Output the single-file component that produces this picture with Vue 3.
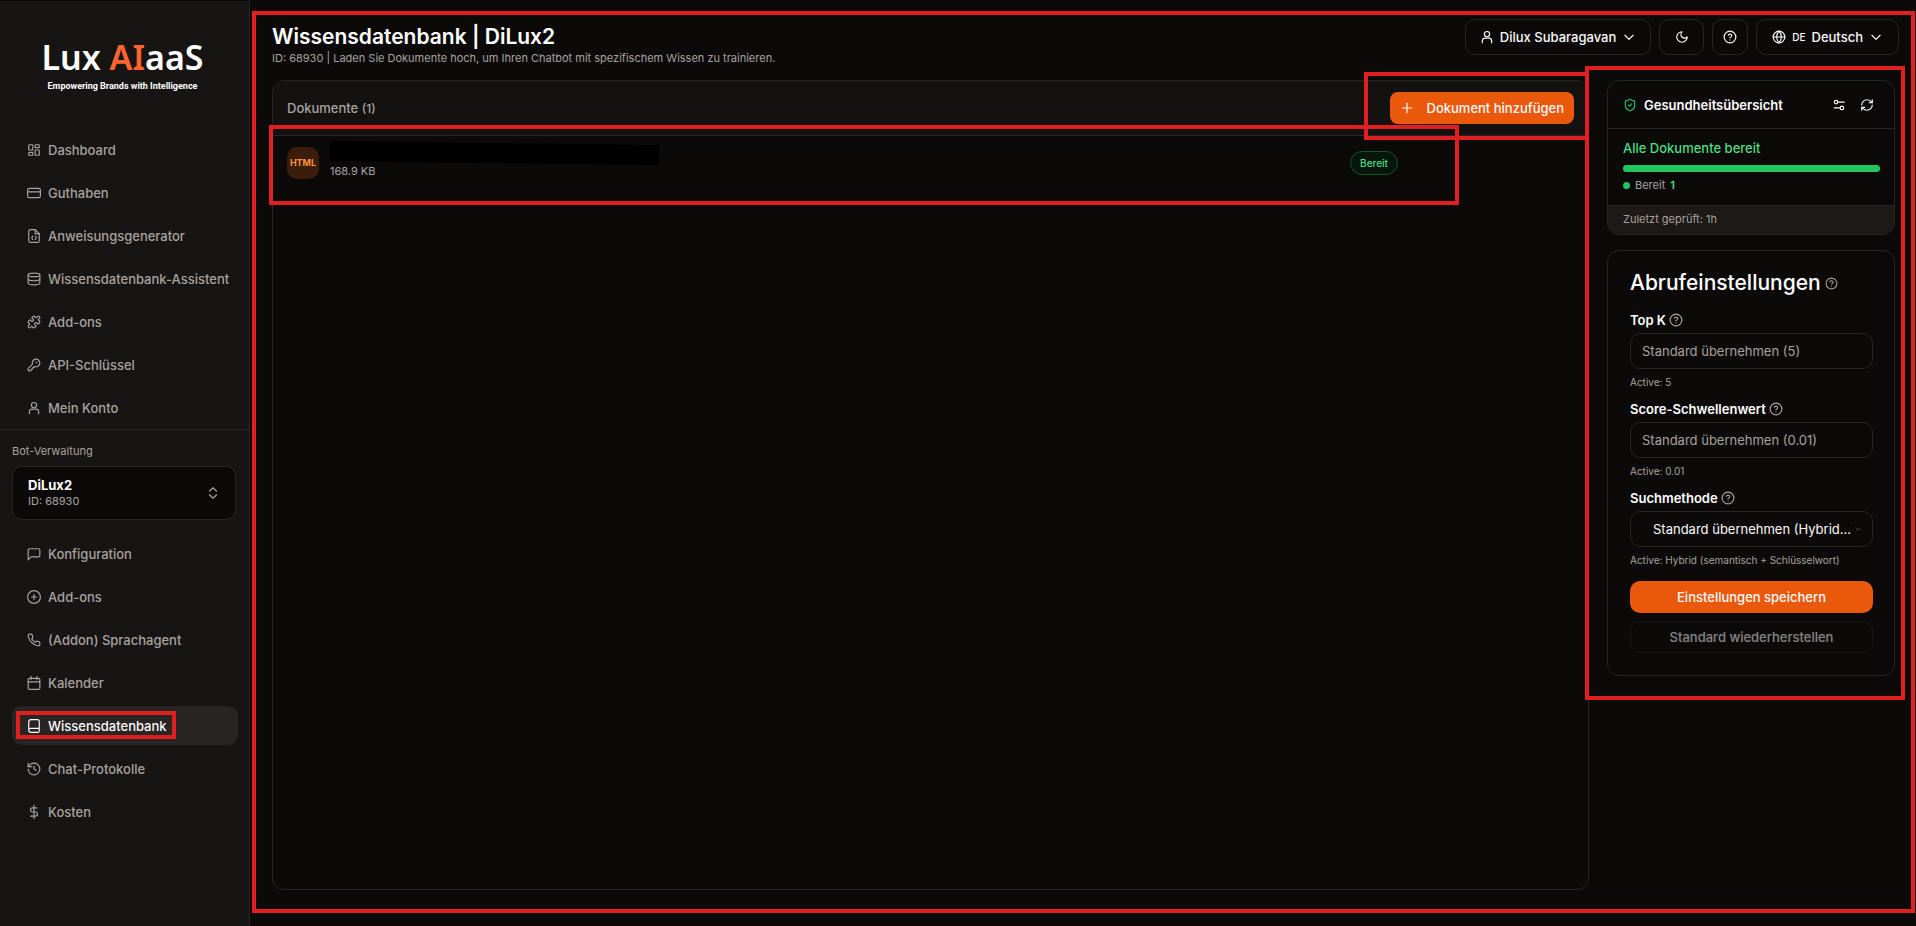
<template>
  <div class="app">
    <aside class="sidebar">
      <a class="logo" href="#">
        <span class="logo-name">Lux <span class="logo-accent">AI</span>aaS</span>
        <span class="logo-tag">Empowering Brands with Intelligence</span>
      </a>

      <nav class="nav">
        <a v-for="item in mainNav" :key="item.label" class="nav-item" href="#">
          <svg class="icon" viewBox="0 0 24 24" v-html="icons[item.icon]"></svg>
          {{ item.label }}
        </a>
      </nav>

      <div class="bot">
        <div class="bot-title">Bot-Verwaltung</div>
        <button class="bot-select" type="button">
          <span class="bot-info">
            <span class="bot-name">DiLux2</span>
            <span class="bot-id">ID: 68930</span>
          </span>
          <svg class="icon" viewBox="0 0 24 24" v-html="icons.upDown"></svg>
        </button>
      </div>

      <nav class="nav">
        <a
          v-for="item in botNav"
          :key="item.label"
          class="nav-item"
          :class="{ active: item.label === current }"
          href="#"
          @click.prevent="current = item.label"
        >
          <svg class="icon" viewBox="0 0 24 24" v-html="icons[item.icon]"></svg>
          {{ item.label }}
          <span v-if="item.marked" class="mark mark-nav"></span>
        </a>
      </nav>
    </aside>

    <main class="main">
      <header class="topbar">
        <div class="heading">
          <h1>Wissensdatenbank | DiLux2</h1>
          <p>ID: 68930 | Laden Sie Dokumente hoch, um Ihren Chatbot mit spezifischem Wissen zu trainieren.</p>
        </div>
        <div class="actions">
          <button class="top-btn user" type="button">
            <svg class="icon" viewBox="0 0 24 24" v-html="icons.user"></svg>
            Dilux Subaragavan
            <svg class="icon" viewBox="0 0 24 24" v-html="icons.down"></svg>
          </button>
          <button class="top-btn theme" type="button" aria-label="Design wechseln">
            <svg class="icon" viewBox="0 0 24 24" v-html="icons.moon"></svg>
          </button>
          <button class="top-btn help" type="button" aria-label="Hilfe">
            <svg class="icon" viewBox="0 0 24 24" v-html="icons.help"></svg>
          </button>
          <button class="top-btn lang" type="button">
            <svg class="icon" viewBox="0 0 24 24" v-html="icons.globe"></svg>
            <span class="lang-code">DE</span>
            Deutsch
            <svg class="icon" viewBox="0 0 24 24" v-html="icons.down"></svg>
          </button>
        </div>
      </header>

      <div class="content">
        <section class="docs">
          <div class="docs-head">
            <h2>Dokumente <span>({{ documents.length }})</span></h2>
            <button class="add-btn" type="button">
              <svg class="icon" viewBox="0 0 24 24" v-html="icons.plus"></svg>
              Dokument hinzufügen
            </button>
            <span class="mark mark-add"></span>
          </div>
          <div v-for="doc in documents" :key="doc.type" class="doc">
            <span class="doc-type">{{ doc.type }}</span>
            <div class="doc-info">
              <div class="doc-redacted"></div>
              <div class="doc-size">{{ doc.size }}</div>
            </div>
            <span class="status">{{ doc.status }}</span>
            <span class="mark mark-doc"></span>
          </div>
        </section>

        <aside class="panels">
          <section class="card health">
            <div class="health-head">
              <svg class="icon shield" viewBox="0 0 24 24" v-html="icons.shield"></svg>
              <h2>Gesundheitsübersicht</h2>
              <button class="icon-btn" type="button" aria-label="Einstellungen">
                <svg class="icon" viewBox="0 0 24 24" v-html="icons.settings"></svg>
              </button>
              <button class="icon-btn" type="button" aria-label="Aktualisieren">
                <svg class="icon" viewBox="0 0 24 24" v-html="icons.refresh"></svg>
              </button>
            </div>
            <div class="health-body">
              <div class="health-state">Alle Dokumente bereit</div>
              <div class="bar"><div class="bar-fill" :style="{ width: ready + '%' }"></div></div>
              <div class="legend"><span class="dot"></span>Bereit <b>1</b></div>
            </div>
            <div class="health-foot">Zuletzt geprüft: 1h</div>
          </section>

          <form class="card settings" @submit.prevent>
            <h2 class="settings-title">
              Abrufeinstellungen
              <svg class="icon hint" viewBox="0 0 24 24" v-html="icons.help"></svg>
            </h2>

            <div class="field">
              <label for="topk">Top K <svg class="icon hint" viewBox="0 0 24 24" v-html="icons.help"></svg></label>
              <input id="topk" v-model="topK" type="text" placeholder="Standard übernehmen (5)" />
              <div class="note">Active: 5</div>
            </div>
            <div class="field">
              <label for="score">Score-Schwellenwert <svg class="icon hint" viewBox="0 0 24 24" v-html="icons.help"></svg></label>
              <input id="score" v-model="score" type="text" placeholder="Standard übernehmen (0.01)" />
              <div class="note">Active: 0.01</div>
            </div>
            <div class="field">
              <label for="method">Suchmethode <svg class="icon hint" viewBox="0 0 24 24" v-html="icons.help"></svg></label>
              <div class="select-wrap">
                <select id="method">
                  <option>Standard übernehmen (Hybrid...</option>
                </select>
                <svg class="icon select-arrow" viewBox="0 0 24 24" v-html="icons.down"></svg>
              </div>
              <div class="note">Active: Hybrid (semantisch + Schlüsselwort)</div>
            </div>

            <button class="save" type="submit">Einstellungen speichern</button>
            <button class="reset" type="button" disabled>Standard wiederherstellen</button>
          </form>
          <span class="mark mark-panels"></span>
        </aside>
      </div>
      <span class="mark mark-main"></span>
    </main>
  </div>
</template>

<script setup>
import { ref } from 'vue'

const current = ref('Wissensdatenbank')
const topK = ref('')
const score = ref('')
const ready = ref(100)

const documents = [{ type: 'HTML', size: '168.9 KB', status: 'Bereit' }]

const mainNav = [
  { label: 'Dashboard', icon: 'dashboard' },
  { label: 'Guthaben', icon: 'card' },
  { label: 'Anweisungsgenerator', icon: 'fileCode' },
  { label: 'Wissensdatenbank-Assistent', icon: 'database' },
  { label: 'Add-ons', icon: 'puzzle' },
  { label: 'API-Schlüssel', icon: 'key' },
  { label: 'Mein Konto', icon: 'user' },
]

const botNav = [
  { label: 'Konfiguration', icon: 'message' },
  { label: 'Add-ons', icon: 'plusCircle' },
  { label: '(Addon) Sprachagent', icon: 'phone' },
  { label: 'Kalender', icon: 'calendar' },
  { label: 'Wissensdatenbank', icon: 'book', marked: true },
  { label: 'Chat-Protokolle', icon: 'history' },
  { label: 'Kosten', icon: 'dollar' },
]

const icons = {
  dashboard: '<rect width="7" height="9" x="3" y="3" rx="1"/><rect width="7" height="5" x="14" y="3" rx="1"/><rect width="7" height="9" x="14" y="12" rx="1"/><rect width="7" height="5" x="3" y="16" rx="1"/>',
  card: '<rect width="22" height="16" x="1" y="4" rx="3"/><path d="M1 10h22"/>',
  fileCode: '<path d="M14 1H6a3 3 0 0 0-3 3v16a3 3 0 0 0 3 3h12a3 3 0 0 0 3-3V8z"/><path d="M14 1v7h7"/><path d="m10 12-2 3 2 3"/><path d="m14 12 2 3-2 3"/>',
  database: '<ellipse cx="12" cy="5" rx="10" ry="3"/><path d="M2 5v14c0 2 4 3 10 3s10-1 10-3V5"/><path d="M2 12c0 2 4 3 10 3s10-1 10-3"/>',
  puzzle: '<path d="M19.439 7.85c-.049.322.059.648.289.878l1.568 1.568c.47.47.706 1.087.706 1.704s-.235 1.233-.706 1.704l-1.611 1.611a.98.98 0 0 1-.837.276c-.47-.07-.802-.48-.968-.925a2.501 2.501 0 1 0-3.214 3.214c.446.166.855.497.925.968a.979.979 0 0 1-.276.837l-1.61 1.61a2.404 2.404 0 0 1-1.705.707 2.402 2.402 0 0 1-1.704-.706l-1.568-1.568a1.026 1.026 0 0 0-.877-.29c-.493.074-.84.504-1.02.968a2.5 2.5 0 1 1-3.237-3.237c.464-.18.894-.527.967-1.02a1.026 1.026 0 0 0-.289-.877l-1.568-1.568A2.402 2.402 0 0 1 1.998 12c0-.617.236-1.234.706-1.704L4.23 8.77c.24-.24.581-.353.917-.303.515.077.877.528 1.073 1.01a2.5 2.5 0 1 0 3.259-3.259c-.482-.196-.933-.558-1.01-1.073-.05-.336.062-.676.303-.917l1.525-1.525A2.402 2.402 0 0 1 12 1.998c.617 0 1.234.236 1.704.706l1.568 1.568c.23.23.556.338.877.29.493-.074.84-.504 1.02-.968a2.5 2.5 0 1 1 3.237 3.237c-.464.18-.894.527-.967 1.02Z"/>',
  key: '<path d="M2.586 17.414A2 2 0 0 0 2 18.828V21a1 1 0 0 0 1 1h3a1 1 0 0 0 1-1v-1a1 1 0 0 1 1-1h1a1 1 0 0 0 1-1v-1a1 1 0 0 1 1-1h.172a2 2 0 0 0 1.414-.586l.814-.814a6.5 6.5 0 1 0-4-4z"/><circle cx="16.5" cy="7.5" r=".5"/>',
  user: '<circle cx="12" cy="7" r="4.5"/><path d="M20 22v-3a5 5 0 0 0-5-5H9a5 5 0 0 0-5 5v3"/>',
  upDown: '<path d="m6 15 6 6 6-6"/><path d="m6 9 6-6 6 6"/>',
  message: '<path d="M22 15a2 2 0 0 1-2 2H7l-5 5V5a2 2 0 0 1 2-2h16a2 2 0 0 1 2 2z"/>',
  plusCircle: '<circle cx="12" cy="12" r="11"/><path d="M8 12h8"/><path d="M12 8v8"/>',
  phone: '<path d="M22 16.92v3a2 2 0 0 1-2.18 2 19.79 19.79 0 0 1-8.63-3.07 19.5 19.5 0 0 1-6-6 19.79 19.79 0 0 1-3.07-8.67A2 2 0 0 1 4.11 2h3a2 2 0 0 1 2 1.72c.127.96.361 1.903.7 2.81a2 2 0 0 1-.45 2.11L8.09 9.91a16 16 0 0 0 6 6l1.27-1.27a2 2 0 0 1 2.11-.45c.907.339 1.85.573 2.81.7A2 2 0 0 1 22 16.92z"/>',
  calendar: '<rect width="20" height="19" x="2" y="4" rx="2"/><path d="M7 1v5"/><path d="M17 1v5"/><path d="M2 10h20"/>',
  book: '<path d="M3 19V5a4 4 0 0 1 4-4h11a3 3 0 0 1 3 3v16a3 3 0 0 1-3 3H7a4 4 0 0 1-4-4 3 3 0 0 1 3-3h15"/>',
  history: '<path d="M2 12a10 10 0 1 0 10-10 10.8 10.8 0 0 0-7.5 3L2 8"/><path d="M2 2v6h6"/><path d="M12 7v5l4 2"/>',
  dollar: '<path d="M12 1v22"/><path d="M17 5H9.5a3.5 3.5 0 0 0 0 7h5a3.5 3.5 0 0 1 0 7H6"/>',
  down: '<path d="m5 9 7 7 7-7"/>',
  moon: '<path d="M12 3a6 6 0 0 0 9 9 9 9 0 1 1-9-9Z"/>',
  help: '<circle cx="12" cy="12" r="10"/><path d="M9.09 9a3 3 0 0 1 5.83 1c0 2-3 3-3 3"/><path d="M12 17h.01"/>',
  globe: '<circle cx="12" cy="12" r="10"/><path d="M12 2a14.5 14.5 0 0 0 0 20 14.5 14.5 0 0 0 0-20"/><path d="M2 12h20"/>',
  plus: '<path d="M4 12h16"/><path d="M12 4v16"/>',
  shield: '<path d="M20 13c0 5-3.5 7.5-7.66 8.95a1 1 0 0 1-.67-.01C7.5 20.5 4 18 4 13V6a1 1 0 0 1 1-1c2 0 4.5-1.2 6.24-2.72a1.17 1.17 0 0 1 1.52 0C14.51 3.81 17 5 19 5a1 1 0 0 1 1 1z"/><path d="m9 12 2 2 4-4"/>',
  settings: '<path d="M21 7H10"/><path d="M14 17H4"/><circle cx="17" cy="17" r="3"/><circle cx="7" cy="7" r="3"/>',
  refresh: '<path d="M3 12a9 9 0 0 1 9-9 9.75 9.75 0 0 1 6.74 2.74L21 8"/><path d="M21 3v5h-5"/><path d="M21 12a9 9 0 0 1-9 9 9.75 9.75 0 0 1-6.74-2.74L3 16"/><path d="M8 16H3v5"/>',
}
</script>

<style>
body { background: #0c0a09; }
</style>

<style scoped>
* { box-sizing: border-box; }
.app {
  display: flex; min-height: 100vh; background: #0c0a09; color: #fafaf9;
  font-family: Inter, "Liberation Sans", sans-serif; font-size: 13px; line-height: 16px;
}
h1, h2, p { margin: 0; }
button, input, select { font: inherit; color: inherit; }
button { cursor: pointer; }
a { color: inherit; text-decoration: none; }
.icon {
  width: 14px; height: 14px; flex: none; fill: none; stroke: currentColor;
  stroke-width: 2; stroke-linecap: round; stroke-linejoin: round;
}

/* Sidebar */
.sidebar {
  width: 250px; flex: none; background: #171513; border-right: 1px solid #292524;
  border-top: 1px solid #0c0a09;
}
.logo { display: flex; flex-direction: column; align-items: center; padding: 36px 4px 35px 0; }
.logo-name { font: 600 34px/40px "Noto Sans", sans-serif; color: #fff; }
.logo-accent { color: #ff6430; }
.logo-tag { font: 700 9px/18px Roboto, sans-serif; color: #fff; }
.nav { display: flex; flex-direction: column; gap: 4px; padding: 0 11px 2px 12px; }
.nav-item {
  position: relative; display: flex; align-items: center; gap: 7px; height: 39px;
  padding: 0 15px; border-radius: 10px; color: #a8a29e; font-weight: 500; white-space: nowrap;
}
.nav-item.active { background: #292524; color: #fafaf9; }
.bot { border-top: 1px solid #292524; padding: 13px 13px 14px 12px; }
.bot-title { font-size: 11px; color: #a8a29e; margin-bottom: 7px; }
.bot-select {
  display: flex; align-items: center; justify-content: space-between; width: 100%; height: 54px;
  padding: 0 15px; border: 1px solid #292524; border-radius: 10px; background: #0c0a09;
  color: #a8a29e; text-align: left;
}
.bot-info { display: flex; flex-direction: column; }
.bot-name { color: #fff; font-weight: 700; }
.bot-id { font-size: 11px; }

/* Header */
.main { position: relative; flex: 1; min-width: 0; display: flex; flex-direction: column; }
.topbar { display: flex; justify-content: space-between; height: 80px; padding: 19px 17px 0 22px; }
.heading { padding-top: 5px; }
h1 { font-size: 21px; line-height: 26px; font-weight: 600; color: #fff; }
.heading p { font-size: 11px; color: #a8a29e; }
.actions { display: flex; gap: 8px; }
.top-btn {
  display: flex; align-items: center; justify-content: center; gap: 6px; height: 36px;
  padding: 0 14px; border: 1px solid #292524; border-radius: 10px; background: #0c0a09; font-weight: 500;
}
.top-btn.theme { width: 45px; }
.top-btn.help { width: 36px; padding: 0; }
.top-btn.lang { padding: 0 15px; }
.lang-code { font-size: 10px; }

/* Documents */
.content { flex: 1; display: flex; align-items: stretch; gap: 18px; padding: 0 21px 36px 22px; }
.docs { flex: 1; min-width: 0; border: 1px solid #292524; border-radius: 12px; }
.docs-head {
  position: relative; display: flex; align-items: center; justify-content: space-between;
  height: 55px; padding: 0 14px; background: #141210; border-bottom: 1px solid #292524;
  border-radius: 11px 11px 0 0;
}
.docs-head h2 { font-size: 13px; font-weight: 500; color: #a8a29e; }
.docs-head h2 span { font-size: 12px; }
.add-btn {
  display: flex; align-items: center; gap: 13px; height: 32px; padding: 0 10px;
  border: 0; border-radius: 8px; background: #ea580c; font-weight: 500;
}
.doc { position: relative; display: flex; align-items: center; gap: 11px; height: 54px; padding: 0 190px 0 14px; }
.doc-type {
  display: flex; align-items: center; justify-content: center; width: 32px; height: 32px;
  border-radius: 10px; background: #3b1d0b; color: #fb923c; font-size: 9px; font-weight: 700;
}
.doc-info { flex: 1; }
.doc-redacted {
  width: 329px; height: 24px; background: #000; margin-top: -6px;
  clip-path: polygon(0 0, 100% 17%, 100% 100%, 0 83%);
}
.doc-size { font-size: 11px; color: #a8a29e; margin-top: -2px; }
.status {
  display: flex; align-items: center; height: 24px; padding: 0 9px; border: 1px solid #14532d;
  border-radius: 12px; background: #07160d; color: #4ade80; font-size: 10px; font-weight: 500;
}

/* Right column */
.panels { position: relative; align-self: flex-start; width: 288px; display: flex; flex-direction: column; gap: 15px; }
.card { border: 1px solid #292524; border-radius: 12px; background: #0c0a09; }
.health { overflow: hidden; }
.health-head { display: flex; align-items: center; height: 48px; padding: 0 13px 0 15px; border-bottom: 1px solid #292524; }
.health-head h2 { flex: 1; margin-left: 7px; font-size: 13px; font-weight: 600; color: #fff; }
.shield { color: #22c55e; }
.icon-btn {
  display: flex; align-items: center; justify-content: center; width: 28px; height: 28px;
  padding: 0; border: 0; background: none;
}
.health-body { padding: 11px 14px 12px 15px; }
.health-state { color: #4ade80; font-weight: 500; }
.bar { height: 7px; margin: 9px 0 5px; border-radius: 4px; background: #292524; }
.bar-fill { height: 100%; border-radius: 4px; background: #22c55e; }
.legend { display: flex; align-items: center; gap: 5px; font-size: 11px; color: #a8a29e; }
.legend b { color: #4ade80; font-weight: 600; }
.dot { width: 7px; height: 7px; border-radius: 50%; background: #22c55e; }
.health-foot { padding: 5px 15px 7px; border-top: 1px solid #292524; background: #1c1917; color: #a8a29e; font-size: 11px; }

.settings { padding: 19px 21px 22px 22px; display: flex; flex-direction: column; }
.settings-title {
  display: flex; align-items: center; gap: 4px; margin-bottom: 16px;
  font-size: 21px; line-height: 26px; font-weight: 500; color: #fff;
}
.hint { color: #a8a29e; }
.settings-title .hint { width: 13px; height: 13px; }
.field { display: flex; flex-direction: column; margin-bottom: 11px; }
.field label { display: flex; align-items: center; gap: 3px; margin-bottom: 5px; font-weight: 600; color: #fff; }
.field input, .field select {
  width: 100%; height: 36px; padding: 0 11px; border: 1px solid #292524; border-radius: 10px;
  background: #0c0a09; outline: none;
}
.field input::placeholder { color: #a8a29e; opacity: 1; }
.field select { appearance: none; padding: 0 20px 0 22px; }
.select-wrap { position: relative; }
.select-arrow { position: absolute; right: 11px; top: 14px; width: 8px; height: 8px; color: #78716c; }
.note { margin-top: 5px; font-size: 10px; color: #a8a29e; }
.save, .reset { height: 32px; border-radius: 10px; font-weight: 500; }
.save { margin: 2px 0 8px; border: 0; background: #ea580c; }
.reset { border: 1px solid #292524; background: none; opacity: .5; cursor: default; }

/* Red highlight frames */
.mark { position: absolute; border: 4px solid #e02020; pointer-events: none; z-index: 1; }
.mark-main { inset: 11px 1px 13px 2px; }
.mark-nav { top: 5px; left: 4px; width: 160px; height: 28px; }
.mark-add { top: -9px; right: -1px; bottom: -5px; width: 225px; }
.mark-doc { top: -11px; left: -4px; right: 129px; bottom: -15px; }
.mark-panels { inset: -14px -10px -24px -22px; }
</style>
